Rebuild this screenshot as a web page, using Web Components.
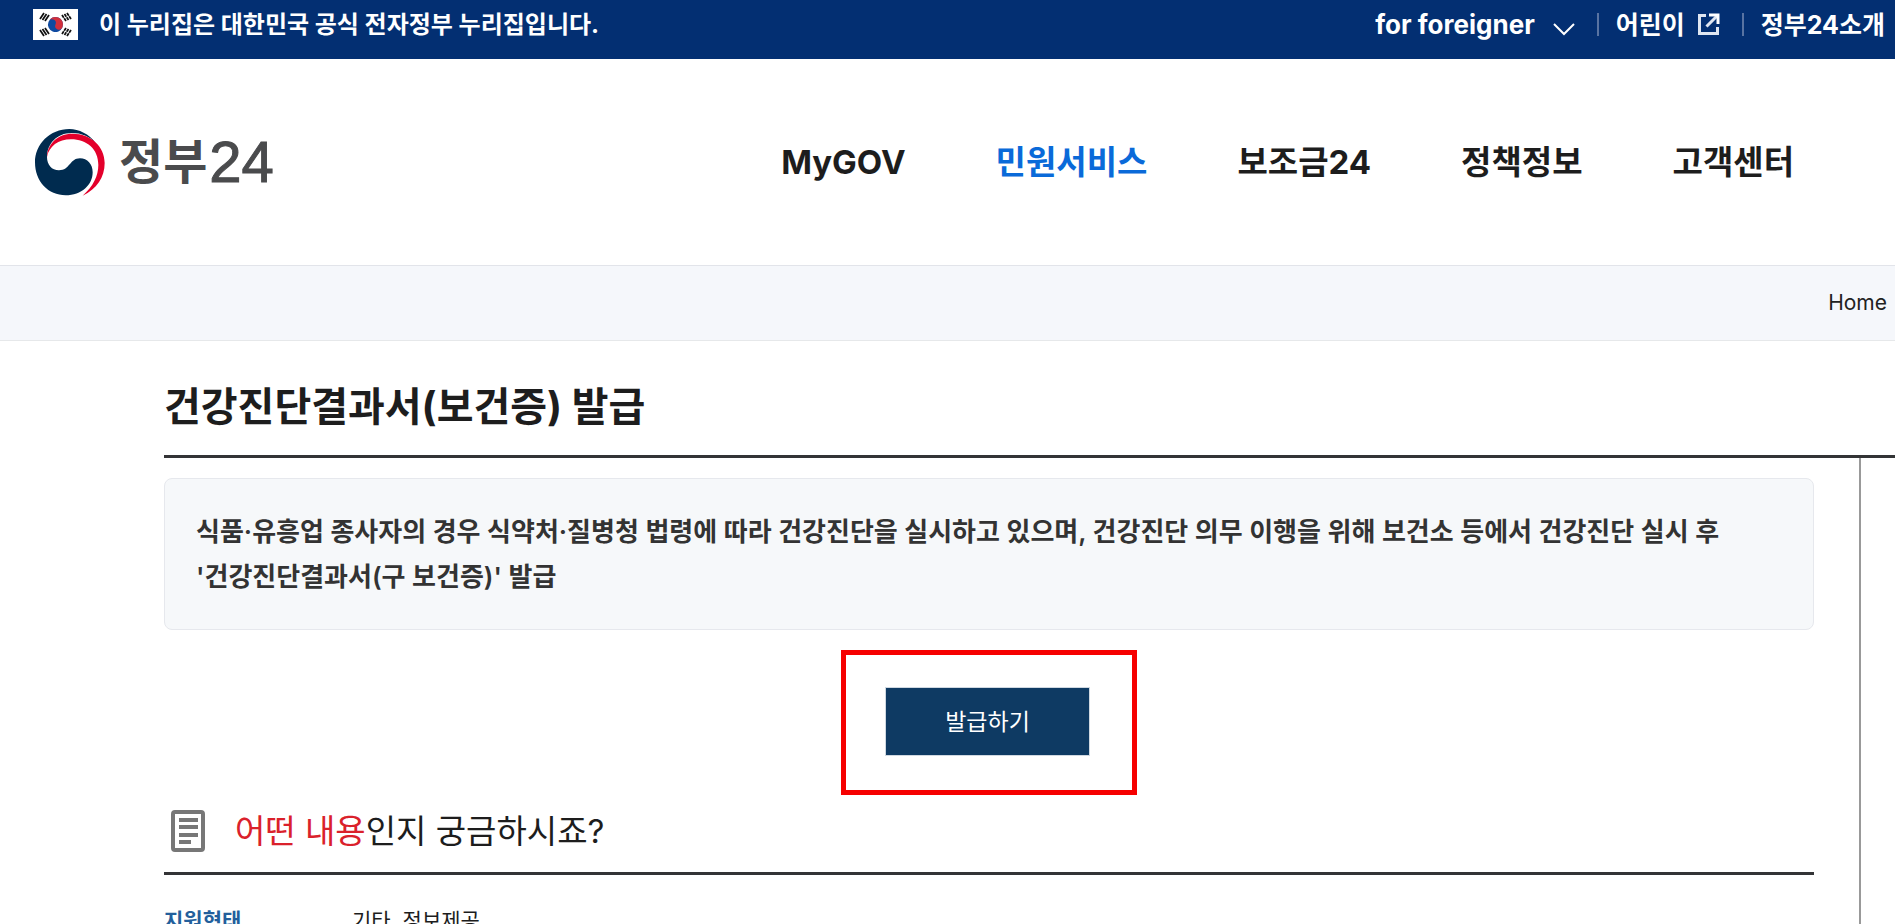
<!DOCTYPE html>
<html lang="ko">
<head>
<meta charset="utf-8">
<meta name="viewport" content="width=device-width, initial-scale=1">
<title>건강진단결과서(보건증) 발급 | 정부24</title>
<style>
	html, body {
		margin: 0;
		height: 100%;
	}
	body {
		overflow: hidden;
		background: #fff;
		color: #1d1d1d;
		font-family: Inter, "Noto Sans CJK KR", sans-serif;
	}
</style>
</head>
<body>
	<gov-topbar>
		이 누리집은 대한민국 공식 전자정부 누리집입니다.
	</gov-topbar>
	<gov-header>
		<gov-nav-item href="#mygov">MyGOV</gov-nav-item>
		<gov-nav-item href="#service" active>민원서비스</gov-nav-item>
		<gov-nav-item href="#subsidy">보조금24</gov-nav-item>
		<gov-nav-item href="#policy">정책정보</gov-nav-item>
		<gov-nav-item href="#center">고객센터</gov-nav-item>
	</gov-header>
	<gov-breadcrumb><a href="#home">Home</a></gov-breadcrumb>
	<gov-service>
		<span slot="title">건강진단결과서(보건증) 발급</span>
		<gov-summary>식품·유흥업 종사자의 경우 식약처·질병청 법령에 따라 건강진단을 실시하고 있으며, 건강진단 의무 이행을 위해 보건소 등에서 건강진단 실시 후 '건강진단결과서(구 보건증)' 발급</gov-summary>
		<gov-apply>발급하기</gov-apply>
		<gov-section>
			<em slot="point">어떤 내용</em>
			<span slot="heading">인지 궁금하시죠?</span>
			<gov-info-row>
				<span slot="label">지원형태</span>
				기타, 정보제공
			</gov-info-row>
		</gov-section>
	</gov-service>

<script>
(function()  {
	function define(name, html) {
		let template = document.createElement("template");
		template.innerHTML = html;

		customElements.define(name, class extends HTMLElement {
			constructor() {
				super();
				this._shadowRoot = this.attachShadow({mode: "open"});
				this._shadowRoot.appendChild(template.content.cloneNode(true));
			}
		});
	}

	define("gov-flag", `
		<style>
		:host {
			display: block;
			flex: none;
			width: 45px;
			height: 31px;
		}
		svg {
			display: block;
			width: 100%;
			height: 100%;
		}
		</style>
		<svg viewBox="0 0 90 62" aria-hidden="true">
			<rect width="90" height="62" fill="#fff"/>
			<g transform="rotate(22 45 31)">
				<circle cx="45" cy="31" r="15" fill="#0f4aa0"/>
				<path d="M30 31a15 15 0 0 1 30 0a7.5 7.5 0 0 1-15 0a7.5 7.5 0 0 0-15 0z" fill="#d22f3c"/>
			</g>
			<g stroke="#111" stroke-width="3.5">
				<path d="M14 20l8-12M19 22l8-12M24 24l8-12"/>
				<path d="M76 42l-8 12M71 40l-8 12M66 38l-8 12" stroke-dasharray="6.5 1.5"/>
				<path d="M76 20l-8-12M71 22l-8-12M66 24l-8-12" stroke-dasharray="6.5 1.5"/>
				<path d="M14 42l8 12M19 40l8 12M24 38l8 12"/>
			</g>
		</svg>
	`);

	define("gov-topbar", `
		<style>
		:host {
			display: flex;
			align-items: center;
			box-sizing: border-box;
			height: 59px;
			padding: 0 10px 10px 33px;
			background: #032f72;
			color: #fff;
			font-size: 24px;
			font-weight: 700;
			line-height: 32px;
			white-space: nowrap;
		}
		.notice {
			margin: 0 auto 0 21px;
		}
		.links {
			display: flex;
			align-items: center;
			font-size: 25px;
		}
		a, button {
			display: flex;
			align-items: center;
			padding: 0;
			border: 0;
			background: none;
			color: inherit;
			font: inherit;
			text-decoration: none;
			cursor: pointer;
		}
		button {
			gap: 18px;
			font-size: 26px;
		}
		button svg {
			padding-top: 8px;
		}
		a {
			gap: 12px;
		}
		.bar {
			width: 2px;
			height: 23px;
			margin: 0 17px 0 22px;
			background: #5873a2;
		}
		</style>
		<gov-flag></gov-flag>
		<span class="notice"><slot></slot></span>
		<div class="links">
			<button type="button">for foreigner
				<svg width="22" height="14" viewBox="0 0 22 14" fill="none" stroke="#fff" stroke-width="2" aria-hidden="true"><path d="M1 2l10 10L21 2"/></svg>
			</button>
			<span class="bar"></span>
			<a href="#kids">어린이
				<svg width="23" height="23" viewBox="0 0 23 23" fill="none" stroke="#dfe6f1" stroke-width="3" aria-hidden="true"><path d="M9 2.5H2.5v18h18V14"/><path d="M9.5 13.5L20 3"/><path d="M12 2h9v9" stroke="#fff"/></svg>
			</a>
			<span class="bar"></span>
			<a href="#about">정부24소개</a>
		</div>
	`);

	define("gov-logo", `
		<style>
		:host {
			display: block;
		}
		a {
			display: flex;
			align-items: center;
			gap: 14px;
			color: #4a4b4d;
			text-decoration: none;
		}
		.name {
			display: flex;
			align-items: center;
			gap: 2px;
			font-size: 48px;
			font-weight: 700;
			line-height: 64px;
		}
		.num {
			font-family: "Liberation Sans", sans-serif;
			font-size: 58px;
			font-weight: 400;
			-webkit-text-stroke: 1px;
		}
		</style>
		<a href="#home">
			<svg width="70" height="67" viewBox="0 0 210 201" aria-hidden="true">
				<path fill="#002b4f" d="M182 42C162 15 132 0 103 0C45 0 0 45 0 100C0 158 40 199 92 199C140 199 173 168 173 130C173 105 157 88 135 88C104 88 105 124 72 124C50 124 36 107 36 84C36 45 65 12 110 12C140 12 163 22 182 42Z"/>
				<path fill="#e4002b" d="M36 84C37 45 68 14 112 14C168 14 209 52 209 102C209 145 185 180 143 200C175 172 190 140 190 108C190 60 155 31 108 31C70 31 42 52 36 84Z"/>
			</svg>
			<span class="name">정부<span class="num">24</span></span>
		</a>
	`);

	define("gov-header", `
		<style>
		:host {
			display: flex;
			align-items: center;
			justify-content: space-between;
			box-sizing: border-box;
			height: 206px;
			padding: 0 101px 0 35px;
		}
		nav {
			display: flex;
			gap: 90px;
		}
		</style>
		<gov-logo></gov-logo>
		<nav><slot></slot></nav>
	`);

	let navTemplate = document.createElement("template");
	navTemplate.innerHTML = `
		<style>
		:host {
			display: block;
		}
		a {
			color: #1d1d1d;
			font-size: 33px;
			font-weight: 700;
			line-height: 44px;
			white-space: nowrap;
			text-decoration: none;
		}
		:host([active]) a {
			color: #0a6ad9;
		}
		</style>
		<a><slot></slot></a>
	`;

	class GovNavItem extends HTMLElement {
		constructor() {
			super();
			this._shadowRoot = this.attachShadow({mode: "open"});
			this._shadowRoot.appendChild(navTemplate.content.cloneNode(true));
		}

		static get observedAttributes() {
			return ["href"];
		}

		attributeChangedCallback(name, oldValue, newValue) {
			this._shadowRoot.querySelector("a").setAttribute("href", newValue);
		}
	}

	customElements.define("gov-nav-item", GovNavItem);

	define("gov-breadcrumb", `
		<style>
		:host {
			display: flex;
			align-items: center;
			justify-content: flex-end;
			box-sizing: border-box;
			height: 76px;
			padding: 0 8px;
			border-top: 1px solid #e2e4ea;
			border-bottom: 1px solid #e6e8ea;
			background: #f5f7fb;
			font-size: 21px;
			line-height: 32px;
		}
		::slotted(a) {
			color: #222;
			text-decoration: none;
		}
		</style>
		<slot></slot>
	`);

	define("gov-service", `
		<style>
		:host {
			display: block;
			padding-left: 164px;
		}
		h1 {
			margin: 0;
			padding: 42px 0 24px;
			border-bottom: 3px solid #333436;
			font-size: 40px;
			font-weight: 700;
			line-height: 48px;
		}
		.body {
			margin-right: 34px;
			padding: 20px 45px 80px 0;
			border-right: 2px solid #999;
		}
		</style>
		<h1><slot name="title"></slot></h1>
		<div class="body"><slot></slot></div>
	`);

	define("gov-summary", `
		<style>
		:host {
			display: block;
			padding: 30px 31px;
			border: 1px solid #e6e8ed;
			border-radius: 8px;
			background: #f6f8fa;
			color: #333;
			font-size: 26px;
			font-weight: 600;
			line-height: 45px;
			word-break: keep-all;
		}
		</style>
		<slot></slot>
	`);

	define("gov-apply", `
		<style>
		:host {
			display: flex;
			justify-content: center;
			padding: 20px 0 14px;
		}
		.mark {
			padding: 32px 42px 34px 39px;
			border: 5px solid #f60000;
		}
		button {
			display: block;
			width: 205px;
			height: 69px;
			padding: 0 0 4px;
			border: 1px solid #cfd8e1;
			background: #0e3a63;
			color: #fff;
			font: inherit;
			font-size: 23px;
			cursor: pointer;
		}
		</style>
		<div class="mark"><button type="button"><slot></slot></button></div>
	`);

	define("gov-section", `
		<style>
		:host {
			display: block;
		}
		h2 {
			display: flex;
			align-items: center;
			margin: 0;
			padding: 0 0 19px 7px;
			border-bottom: 3px solid #333436;
			font-size: 33px;
			font-weight: 400;
			line-height: 44px;
			white-space: nowrap;
		}
		svg {
			margin-right: 30px;
		}
		::slotted(em) {
			color: #da212b;
			font-style: normal;
		}
		</style>
		<h2>
			<svg width="34" height="42" viewBox="0 0 34 42" fill="none" stroke="#777" aria-hidden="true">
				<rect x="2" y="2" width="30" height="38" rx="2" stroke-width="4"/>
				<path d="M8 10h19M8 17h19M8 25h19M8 32h12" stroke-width="4"/>
			</svg>
			<slot name="point"></slot><slot name="heading"></slot>
		</h2>
		<slot></slot>
	`);

	define("gov-info-row", `
		<style>
		:host {
			display: block;
		}
		dl {
			display: grid;
			grid-template-columns: 188px 1fr;
			margin: 0;
			padding-top: 30px;
			font-size: 21px;
			line-height: 32px;
		}
		dt {
			color: #235f9c;
			font-weight: 700;
		}
		dd {
			margin: 0;
		}
		</style>
		<dl>
			<dt><slot name="label"></slot></dt>
			<dd><slot></slot></dd>
		</dl>
	`);
})();
</script>
</body>
</html>
